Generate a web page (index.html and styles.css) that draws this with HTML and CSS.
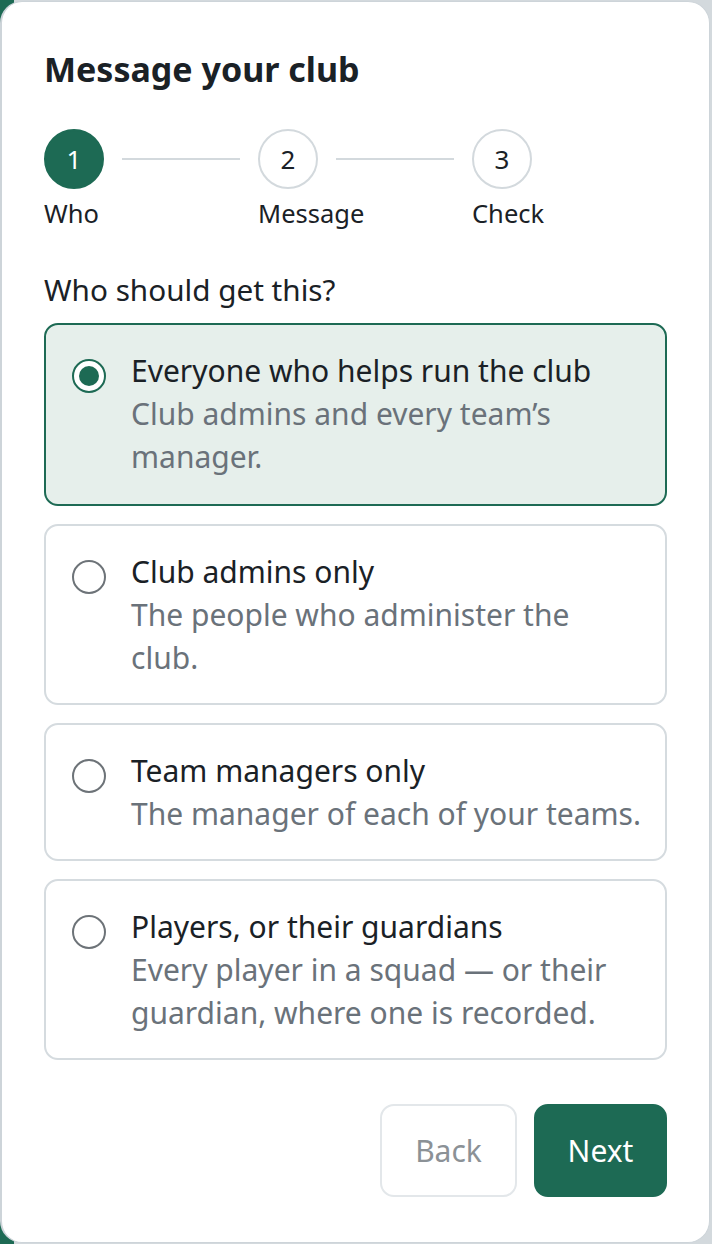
FILE: index.html
```html
<!DOCTYPE html>
<html lang="en">

<head>
  <meta charset="UTF-8">
  <meta name="viewport" content="width=device-width, initial-scale=1.0">
  <title>Message your club</title>
  <link rel="stylesheet" href="styles.css">
</head>

<body>
  <div class="sheet">
    <h2 class="sheet-title">Message your club</h2>

    <!-- steps -->
    <div class="steps">
      <div class="step">
        <div class="step-head">
          <span class="step-num active">1</span>
          <span class="step-line"></span>
        </div>
        <div class="step-label">Who</div>
      </div>
      <div class="step">
        <div class="step-head">
          <span class="step-num">2</span>
          <span class="step-line"></span>
        </div>
        <div class="step-label">Message</div>
      </div>
      <div class="step last">
        <div class="step-head">
          <span class="step-num">3</span>
        </div>
        <div class="step-label">Check</div>
      </div>
    </div>

    <p class="question">Who should get this?</p>

    <div class="options">
      <label class="option selected">
        <span class="radio"><span class="radio-dot"></span></span>
        <span class="option-text">
          <span class="option-title">Everyone who helps run the club</span>
          <span class="option-desc">Club admins and every team’s manager.</span>
        </span>
      </label>
      <label class="option">
        <span class="radio"></span>
        <span class="option-text">
          <span class="option-title">Club admins only</span>
          <span class="option-desc">The people who administer the club.</span>
        </span>
      </label>
      <label class="option">
        <span class="radio"></span>
        <span class="option-text">
          <span class="option-title">Team managers only</span>
          <span class="option-desc">The manager of each of your teams.</span>
        </span>
      </label>
      <label class="option">
        <span class="radio"></span>
        <span class="option-text">
          <span class="option-title">Players, or their guardians</span>
          <span class="option-desc">Every player in a squad — or their guardian, where one is recorded.</span>
        </span>
      </label>
    </div>

    <div class="actions">
      <button class="btn btn-back" disabled>Back</button>
      <button class="btn btn-next">Next</button>
    </div>
  </div>
</body>

</html>
```

FILE: styles.css
```css
body {
  margin: 0;
  padding: 1px 2px 1px 0;
  font-family: 'Noto Sans', 'Open Sans', sans-serif;
  color: #1a2126;
  background: linear-gradient(to right, #1d6a54 14px, #d3d9dd 14px);
}

.sheet {
  box-sizing: border-box;
  height: 1242px;
  background: #fff;
  border: 1px solid #cdd4d9;
  border-left: 2px solid #cdd4d9;
  border-radius: 22px;
  padding: 45px 42px 42px 42px;
}

.sheet-title {
  margin: 0;
  font-size: 34px;
  font-weight: 700;
  line-height: 44px;
}

/* steps */
.steps {
  display: flex;
  margin-top: 38px;
}

.step {
  flex: none;
  width: 214px;
}

.step.last {
  width: auto;
}

.step-head {
  display: flex;
  align-items: center;
}

.step-num {
  box-sizing: border-box;
  flex: none;
  width: 60px;
  height: 60px;
  border-radius: 50%;
  border: 2px solid #d3d9dd;
  background: #fff;
  display: flex;
  justify-content: center;
  align-items: center;
  font-size: 26px;
  color: #1a2126;
}

.step-num.active {
  background: #1d6a54;
  border-color: #1d6a54;
  color: #fff;
}

.step-line {
  flex: 1;
  height: 2px;
  background: #d3d9dd;
  margin: 0 18px;
}

.step-label {
  margin-top: 7px;
  font-size: 25.5px;
  line-height: 34px;
}

.question {
  margin: 40px 0 13px;
  font-size: 29.7px;
  line-height: 40px;
}

/* options */
.options {
  display: flex;
  flex-direction: column;
  gap: 18px;
}

.option {
  display: flex;
  align-items: flex-start;
  gap: 25px;
  padding: 24px 24px 24px 26px;
  border: 2px solid #d5dbdf;
  border-radius: 14px;
  background: #fff;
}

.option.selected {
  border-color: #1d6a54;
  background: #e6efeb;
  padding-bottom: 26px;
}

.radio {
  box-sizing: border-box;
  flex: none;
  width: 34px;
  height: 34px;
  margin-top: 10px;
  border: 2px solid #6d7378;
  border-radius: 50%;
  background: #fff;
  display: flex;
  justify-content: center;
  align-items: center;
}

.option.selected .radio {
  border-color: #1d6a54;
}

.radio-dot {
  width: 20px;
  height: 20px;
  border-radius: 50%;
  background: #1d6a54;
}

.option-text {
  display: flex;
  flex-direction: column;
  font-size: 30px;
  line-height: 43px;
}

.option-title {
  color: #1a2126;
}

.option-desc {
  color: #6a727a;
}

/* buttons */
.actions {
  display: flex;
  justify-content: flex-end;
  gap: 17px;
  margin-top: 44px;
}

.btn {
  box-sizing: border-box;
  height: 93px;
  border-radius: 14px;
  font-family: inherit;
  font-size: 30px;
  padding: 0;
}

.btn-back {
  width: 137px;
  background: #fff;
  border: 2px solid #e3e7ea;
  color: #8b9196;
}

.btn-next {
  width: 133px;
  background: #1d6a54;
  border: 2px solid #1d6a54;
  color: #fff;
}
```
